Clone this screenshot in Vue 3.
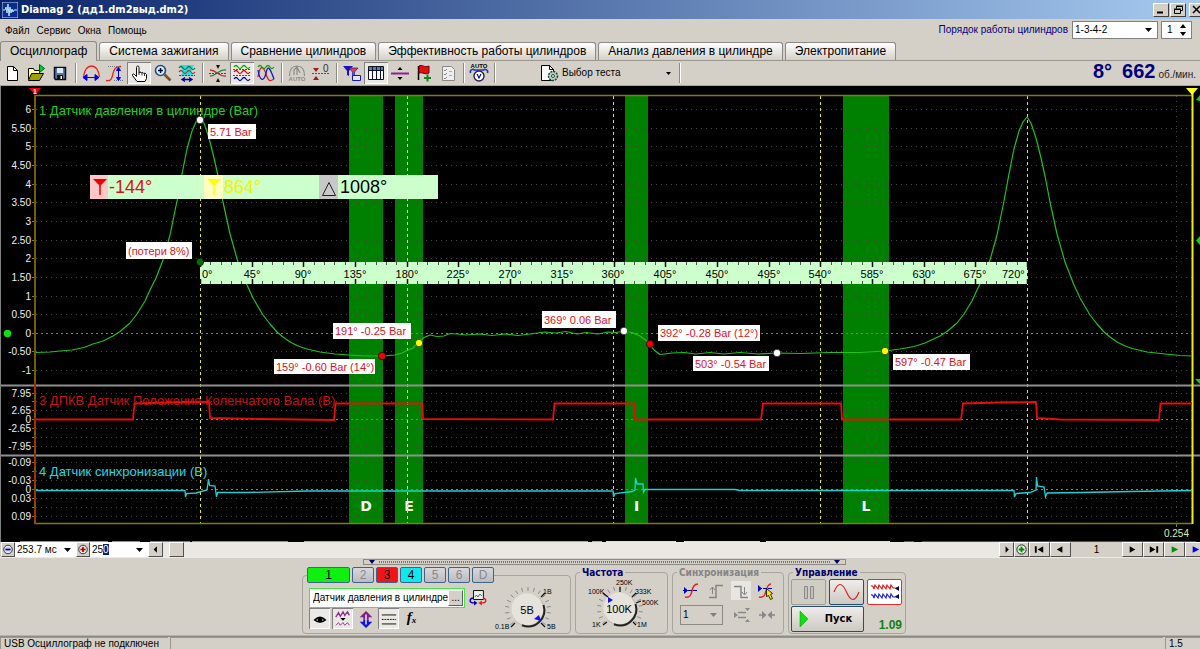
<script setup>
import { ref, onMounted } from 'vue'

const menu = ['Файл', 'Сервис', 'Окна', 'Помощь']
const tabs = [
  'Осциллограф',
  'Система зажигания',
  'Сравнение цилиндров',
  'Эффективность работы цилиндров',
  'Анализ давления в цилиндре',
  'Электропитание'
]
const activeTab = ref(0)

const waves = (y, c) =>
  `<path d="M4 ${y}q2-3 4 0t4 0 4 0 4 0" fill="none" stroke="${c}" stroke-width="1.3"/>`

const toolbar = [
  { label: 'Новый', svg: '<path d="M7.500 4.500h6l4 4v10h-10z" fill="#fff" stroke="#000"/><path d="M13.500 4.500v4h4" fill="none" stroke="#000"/>' },
  { label: 'Открыть', svg: '<path d="M4.500 17.500v-11h5l1 2h5v3" fill="#ffffa0" stroke="#000"/><path d="M4.500 18.500l3-7h12l-4 7z" fill="#a0a000" stroke="#000"/><path d="M15.500 2.500l5 4-5 4z" fill="#0c3" stroke="#052"/>' },
  { label: 'Сохранить', svg: '<path d="M6.500 5.500h11v12h-10l-1-1z" fill="#57789c" stroke="#0a0a20" stroke-width="1.500"/><path d="M9 6h6v5h-6z" fill="#dce8f0"/><path d="M9 13h6v4h-6z" fill="#111"/><path d="M12.500 14h1.500v3h-1.500z" fill="#fff"/>' },
  { sep: true },
  { label: 'Ширина', svg: '<path d="M4.500 15c1-7 3-11 8-11s7 4 8 11" fill="none" stroke="#f02020" stroke-width="1.300"/><path d="M4 15.500h16M8 12.500l-4 3 4 3zM16 12.500l4 3-4 3z" fill="#00e" stroke="#00e"/>' },
  { label: 'Высота', svg: '<path d="M3 18.500c6 1 6-3 7-7s2-7 8-7" fill="none" stroke="#f02020" stroke-width="1.300"/><path d="M5 4.500h12M11 18.500h9" stroke="#777" stroke-dasharray="1 1"/><path d="M15.500 7v10M13.500 8.500l2-3 2 3zM13.500 15.500l2 3 2-3z" fill="#00e" stroke="#00e"/>' },
  { label: 'Рука', pressed: true, svg: '<path d="M10 19.500l-4.500-6c-.5-1.500 1-2 2-1l2 2v-9c0-2 2.500-2 2.500 0v5l1-.500 1.500.7 1.300-.2 1 1 1.400-.3 1.300 1.300v4l-1.500 3z" fill="#fff" stroke="#000"/><path d="M12 10v3M15 11v2.500M17.500 12v2" stroke="#000" stroke-width=".8"/>' },
  { label: 'Масштаб', svg: '<circle cx="9.500" cy="8.500" r="5" fill="#d8f0ff" stroke="#1c4c8c" stroke-width="1.600"/><path d="M7 8.500h5M9.500 6v5" stroke="#003" stroke-width="1.500"/><path d="M13.500 12.500l6 6" stroke="#7a5020" stroke-width="2.600"/>' },
  { label: 'Фильтр', svg: '<path d="M5 3h14l-3 7 3 4H5l3-4z" fill="#20e0e8"/>' + waves(6, '#087848') + waves(10, '#a04030') + '<path d="M4 13.500h16" stroke="#066" stroke-dasharray="2 1"/><path d="M8 17.500h8M10 15.500l-3 2 3 2M14 15.500l3 2-3 2" fill="none" stroke="#009" stroke-width="1.300"/>' },
  { sep: true },
  { label: 'Наложение', svg: '<path d="M4 8c7 0 8 7 16 6" fill="none" stroke="#c03030" stroke-width="1.300"/><path d="M4 14c7 0 8-7 16-6" fill="none" stroke="#308040" stroke-width="1.300"/><path d="M3 11.500h18" stroke="#444" stroke-dasharray="2 1"/><path d="M10 3h4l-2 4zM10 20h4l-2-4z" fill="#111"/>' },
  { label: 'Каналы', pressed: true, svg: waves(5, '#0a0') + waves(10, '#d00') + waves(17, '#00c') + '<path d="M3 7.500h18M3 13.500h18" stroke="#555" stroke-dasharray="2 1"/>' },
  { label: 'Совмещение', svg: waves(5, '#0a0') + '<path d="M4 15c2-12 5-12 8-3s5 7 8 5" fill="none" stroke="#d02020" stroke-width="1.300"/><path d="M4 8c2 12 6 12 8 3s4-5 8 6" fill="none" stroke="#1515d0" stroke-width="1.300"/>' },
  { sep: true },
  { label: 'Авто', svg: '<path d="M4.500 14c0-7 3-10 7.500-10s7.500 3 7.500 10M12 4v9M9 13V8l3-3M15 11l-3-6" fill="none" stroke="#8c8a84" stroke-width="1.200"/><text x="12" y="19" text-anchor="middle" font-size="6" font-weight="bold" fill="#8c8a84">AUTO</text>' },
  { label: 'Ноль', svg: '<path d="M3 11.500h17" stroke="#555" stroke-dasharray="2 1"/><path d="M4 6h6l-3 4zM4 18h6l-3-4z" fill="#a01818"/><text x="14" y="10" font-size="10" fill="#333">0</text>' },
  { sep: true },
  { label: 'Фильтр каналов', svg: '<path d="M3 4h10l-4 5v5l-2-1V9z" fill="#1515c8"/><path d="M9 6h9l-3.500 4v7l-2-1v-6z" fill="#e04040" stroke="#1515c8" stroke-width=".7"/><path d="M12.500 13.500h8v5h-8z" fill="#dfe6ff" stroke="#1515c8"/>' },
  { label: 'Таблица', pressed: true, svg: '<path d="M4.500 4.500h15v13h-15z" fill="#fff" stroke="#112"/><path d="M5 5h14v3H5z" fill="#4c84ac"/><path d="M8.500 5v12M12.500 5v12M16.500 5v12M5 8.500h15" stroke="#113"/>' },
  { label: 'Разделить', svg: '<path d="M3 11.500h18" stroke="#902090" stroke-width="2"/><path d="M9.500 8h5l-2.500-3zM9.500 15h5l-2.500 3z" fill="#000"/>' },
  { label: 'Метка', svg: '<path d="M6.500 4v14" stroke="#000" stroke-width="1.500"/><path d="M7 4c3-2 5 2 10 0v7c-4 2-6-1-10 0z" fill="#e01010" stroke="#600"/><path d="M12 16h7M15.500 12.500v7" stroke="#088a20" stroke-width="2"/>' },
  { label: 'Отчёт', svg: '<path d="M6.500 4.500h9l3 3v11h-12z" fill="#eee" stroke="#888"/><path d="M8 8l1 1 2-2M8 12l1 1 2-2M8 16l1 1 2-2" fill="none" stroke="#888"/><path d="M13 9.500h3M13 13.500h3" stroke="#aaa"/>' },
  { sep: true },
  { label: 'Автоизмерение', svg: '<text x="12" y="6" text-anchor="middle" font-size="6" font-weight="bold" fill="#000">AUTO</text><circle cx="12" cy="14" r="5" fill="#fff" stroke="#224" stroke-width="1.400"/><path d="M10 12l2 4 2-4" fill="none" stroke="#00c" stroke-width="1.200"/><path d="M3.500 11c-1-4 3-4 4-3M20.500 11c1-4-3-4-4-3M7 8h10" fill="none" stroke="#2233b0" stroke-width="1.600"/>' },
  { sep: true }
]

const bands = [
  { x: 349, w: 34, t: 'D' },
  { x: 395, w: 28, t: 'E' },
  { x: 625, w: 23, t: 'I' },
  { x: 843, w: 46, t: 'L' }
]
const cycles = [200.5, 407.5, 613.5, 820.5, 1027.5]

const axis = [
  [110, '6'], [129, '5.50'], [147, '5'], [166, '4.50'], [185, '4'], [203, '3.50'], [222, '3'],
  [241, '2.50'], [259, '2'], [278, '1.50'], [297, '1'], [315, '0.50'], [334, '0', true],
  [352, '-0.50'], [371, '-1'],
  [394, '7.95'], [402, ''], [411, '2.65'], [420, '0', true], [429, '-2.65'], [438, ''], [447, '-7.95'],
  [463, '-0.09'], [472, ''], [481, '-0.03'], [490, '0', true], [499, '0.03'], [508, ''], [517, '0.09']
]

const rise = [[-107, 344], [-97, 341], [-87, 336], [-80, 331.500], [-70, 323], [-63, 314], [-55, 301], [-50, 290], [-44, 278], [-37, 260], [-30, 235], [-23, 201], [-18, 174], [-13, 149], [-8, 131], [-4, 122]]
const fall = [[4, 123], [9, 138], [14, 158], [18, 176], [23, 202], [30, 234], [38, 262], [47, 285], [53, 298], [63, 315], [70, 324], [77, 332], [83, 337], [90, 342], [97, 345.500], [105, 348.500], [120, 352]]
const at = (pts, x) => pts.map(([a, b]) => [a + x, b])
const pressure = [
  [36, 352.500], [50, 352], [60, 351], [72, 350], [84, 347.500],
  ...at(rise, 200), [200, 120], ...at(fall, 200),
  [335, 354], [349, 355], [365, 356], [383, 356], [395, 355], [402, 353], [407, 350.500], [413, 348],
  [418, 342.500], [424, 337.500], [430, 335], [437, 336.500], [444, 336], [450, 333.500], [457, 334],
  [466, 335], [480, 334], [492, 335.500], [505, 334], [518, 335.500], [530, 334], [545, 332], [556, 333],
  [566, 331.500], [577, 334], [586, 332.500], [598, 334], [608, 332], [616, 332.500], [624, 331], [632, 332.500],
  [640, 336], [648, 342], [654, 350], [660, 354.500], [672, 353], [684, 352.500], [696, 354], [710, 352.500],
  [724, 354], [740, 352.500], [758, 354], [777, 353], [800, 353.500], [830, 352.500], [860, 352.500],
  [885, 351], [900, 349], [914, 346.500], [925, 343], ...at(rise.slice(2), 1027), [1027, 117], ...at(fall, 1027),
  [1165, 354], [1180, 355.500], [1192, 356]
].map(p => p.join()).join(' ')

const crank = '36,419.500 133,419.500 134.500,403.500 170,402.500 209,402 210,418 260,419 334,420 335.500,403.500 422.500,403.500 423,419 553,419.500 554.500,403.500 634,403.500 635,419.500 761,419.500 763,403.500 841,403.500 842,419.500 961,419.500 963,403.500 1000,402.500 1036,402 1037,418 1060,419.500 1159,420 1160.500,403.500 1192,403.500'
const sync = '36,490.500 185,490.500 185.500,497 186.500,493.500 196,493 207,490 208.500,479 209.500,485.500 215,486 216.500,497 217.500,492.500 247,492.500 307,491 613,491 613.500,497 615,493.500 632,491.500 635,490 635.500,478 637,484 643,484 643.500,492 645,489.500 735,489.500 740,490.500 1014,490.500 1014.500,497 1016,493.500 1030,492.500 1036,490 1036.500,477 1037.500,486 1044,487 1045.500,497 1047,493 1082,492.500 1130,491.500 1192,490.500'

const flags = [
  { x: 208, y: 124, w: 48, h: 15, t: '5.71 Bar' },
  { x: 126, y: 242, w: 66, h: 17, t: '(потери 8%)' },
  { x: 333, y: 323, w: 78, h: 16, t: '191° -0.25 Bar' },
  { x: 274, y: 359, w: 101, h: 15, t: '159° -0.60 Bar (14°)' },
  { x: 542, y: 311, w: 74, h: 17, t: '369° 0.06 Bar' },
  { x: 658, y: 325, w: 102, h: 16, t: '392° -0.28 Bar (12°)' },
  { x: 693, y: 356, w: 76, h: 15, t: '503° -0.54 Bar' },
  { x: 893, y: 354, w: 77, h: 16, t: '597° -0.47 Bar' }
]
const dots = [
  [200, 120, '#fff'], [200, 262, '#0a6a0a'], [382, 356, '#f00000'], [419, 343, '#ffff00'],
  [624, 331, '#fff'], [650, 344, '#f00000'], [777, 353, '#fff'], [885, 351, '#ffff00']
]
const ticks = Array.from({ length: 81 }, (_, i) => ({ x: Math.round(200 + (i * 827) / 80) + 0.5, major: i % 5 === 0 }))
const degrees = Array.from({ length: 17 }, (_, i) => i * 45)
const degX = d => (d === 0 ? 202 : d === 720 ? 1002 : Math.round(200 + d * 1.1486))

const traces = [
  [20, 108, '#20e020'], [112, 140, '#20e020'], [150, 190, '#20c020'], [192, 288, '#20e020'],
  [304, 588, '#20e0e0'], [592, 602, '#20e0e0'], [606, 676, '#f0f040'], [684, 760, '#f0f040'], [766, 890, '#f0f040'],
  [904, 914, '#e02020'], [922, 1196, '#c02020']
]

const channels = [
  { n: '1', c: 'lime' }, { n: '2' }, { n: '3', c: 'red' }, { n: '4', c: 'cyan' }, { n: '5' }, { n: '6' }, { n: 'D' }
]

const knobTicks = (n, from, to) =>
  Array.from({ length: n }, (_, i) => {
    const a = ((from + ((to - from) * i) / (n - 1)) * Math.PI) / 180
    return { x1: Math.cos(a) * 19, y1: Math.sin(a) * 19, x2: Math.cos(a) * 23, y2: Math.sin(a) * 23 }
  })
const rays = knobTicks(17, 140, 400)

const scale = ref('250')
const scaleBox = ref(null)
onMounted(() => {
  scaleBox.value.focus()
  scaleBox.value.setSelectionRange(2, 3)
})
</script>

<template>
  <div class="window">
    <header class="title">
      <svg class="app-icon" viewBox="0 0 16 16"><rect width="16" height="16" fill="#0c2c90" stroke="#c8d8f8" /><path d="M1 8h2l1-3 1 6 1-9 1 12 1-9 1 6 1-4 1 3 1-2h3" fill="none" stroke="#bfe4ff" /></svg>
      <h1>Diamag 2 (дд1.dm2выд.dm2)</h1>
      <div class="sys">
        <button aria-label="Свернуть"><svg viewBox="0 0 14 11"><path d="M3 8.500h6" stroke="#000" stroke-width="2" /></svg></button>
        <button aria-label="Восстановить"><svg viewBox="0 0 14 11"><path d="M5.500 4.500v-2h6v4h-2M5 2h7" fill="none" stroke="#000" /><path d="M3.500 5.500h6v4h-6zM3 5h7" fill="none" stroke="#000" /></svg></button>
        <button class="close" aria-label="Закрыть"><svg viewBox="0 0 14 11"><path d="M3 2l7 7M10 2l-7 7" stroke="#000" stroke-width="1.500" /></svg></button>
      </div>
    </header>

    <div class="menubar">
      <nav><button v-for="m in menu" :key="m">{{ m }}</button></nav>
      <div class="order">
        <label for="order">Порядок работы цилиндров</label>
        <span class="combo order-combo">
          <select id="order"><option>1-3-4-2</option></select>
          <svg viewBox="0 0 7 4"><path d="M0 0h7L3.500 4z" /></svg>
        </span>
        <span class="spin">
          <input type="text" value="1" aria-label="Номер цилиндра">
          <svg viewBox="0 0 8 12"><path d="M1 4h6L4 0zM1 8h6l-3 4z" /></svg>
        </span>
      </div>
    </div>

    <div class="tabs" role="tablist">
      <button v-for="(t, i) in tabs" :key="t" role="tab" :aria-selected="activeTab === i" :class="{ active: activeTab === i }" @click="activeTab = i">{{ t }}</button>
    </div>

    <div class="toolbar">
      <template v-for="(b, i) in toolbar" :key="i">
        <i v-if="b.sep" class="sep" />
        <button v-else class="tool" :class="{ pressed: b.pressed }" :aria-label="b.label"><svg viewBox="0 0 24 22" v-html="b.svg" /></button>
      </template>
      <button class="test">
        <svg class="test-icon" viewBox="0 0 20 18"><path d="M1.500 1.500h8l4 4v11h-12z" fill="#fff" stroke="#000" /><path d="M9.500 1.500v4h4" fill="none" stroke="#000" /><circle cx="13" cy="12" r="4.500" fill="#b9d0c8" stroke="#243" stroke-width="1.500" stroke-dasharray="2 1" /><circle cx="13" cy="12" r="1.500" fill="#fff" stroke="#243" /></svg>
        <span>Выбор теста</span>
        <svg class="caret" viewBox="0 0 5 3"><path d="M0 0h5L2.500 3z" /></svg>
      </button>
      <i class="sep" />
      <output class="rpm"><b>8°</b><b>662</b><span>об./мин.</span></output>
    </div>

    <svg class="scope" viewBox="0 86 1200 456" role="img" aria-label="Осциллограмма">
      <rect x="0" y="86" width="1200" height="456" fill="#000" />
      <path d="M.5 86v456" stroke="#808080" />
      <rect v-for="b in bands" :key="b.t" :x="b.x" y="96" :width="b.w" height="427" fill="#008000" />

      <g shape-rendering="crispEdges">
        <path v-for="a in axis" :key="a[0]" :d="`M36 ${a[0] - 0.5}H1192`" :class="a[2] ? 'zero' : 'grid'" />
        <path d="M1176.500 96V523" class="grid" />
        <path v-for="a in axis" :key="'t' + a[0]" :d="`M32 ${a[0] - 0.5}h3`" stroke="#808000" />
      </g>
      <text v-for="a in axis" :key="'l' + a[0]" x="31" :y="a[0] + 3" class="axis">{{ a[1] }}</text>

      <text x="39" y="115" class="chan" fill="#20d020">1 Датчик давления в цилиндре (Bar)</text>
      <text x="39" y="405" class="chan" fill="#c01414">3 ДПКВ Датчик Положения Коленчатого Вала (В)</text>
      <text x="39" y="476" class="chan" fill="#20d8e0">4 Датчик синхронизации (В)</text>
      <text v-for="b in bands" :key="'n' + b.t" :x="b.x + b.w / 2" y="511" class="band">{{ b.t }}</text>

      <path v-for="c in cycles" :key="c" :d="`M${c} 96V523`" class="cycle" />

      <path d="M1 385.500H1200M1 455.500H1200" stroke="#909090" stroke-width="2" />
      <path d="M35 95.500H1192M35 523.500H1192" stroke="#808000" stroke-width="1.500" />
      <path d="M35 95V524" stroke="#706000" stroke-width="2" />
      <path d="M35 381V524" stroke="#d00000" stroke-dasharray="14 4" />
      <path d="M1192.500 92V524" stroke="#f0f000" stroke-width="2" />

      <polyline :points="pressure" fill="none" stroke="#20c020" stroke-width="1.200" stroke-linejoin="round" />
      <polyline :points="crank" fill="none" stroke="#e80c0c" stroke-width="1.800" />
      <polyline :points="sync" fill="none" stroke="#20d0d0" stroke-width="1.300" />

      <rect x="200" y="262" width="827" height="22" fill="#ccffcc" />
      <path v-for="t in ticks" :key="t.x" :d="`M${t.x} 262v${t.major ? 5 : 3}M${t.x} 284v${t.major ? -5 : -3}`" stroke="#111" :stroke-width="t.major ? 1.5 : 0.7" />
      <text v-for="d in degrees" :key="'d' + d" :x="degX(d)" y="278" class="deg" :class="{ start: d === 0 || d === 720 }">{{ d }}°</text>

      <rect x="90" y="175" width="348" height="24" fill="#ccffcc" />
      <rect x="90" y="175" width="18" height="24" fill="#ffc8c8" />
      <rect x="204" y="175" width="19" height="24" fill="#ffffc0" />
      <rect x="319" y="175" width="19" height="24" fill="#c8c8c8" />
      <path d="M93 179h14l-7 7z" fill="#f00000" /><path d="M100 180v15" stroke="#f00000" stroke-width="1.500" />
      <path d="M207 179h14l-7 7z" fill="#ffff00" /><path d="M214 180v15" stroke="#ffff00" stroke-width="1.500" />
      <path d="M322.500 195.500h13l-6.500-13z" fill="none" stroke="#222" />
      <text x="109" y="193" class="reading" fill="#e01010">-144°</text>
      <text x="224" y="193" class="reading" fill="#f4f400">864°</text>
      <text x="340" y="193" class="reading" fill="#000">1008°</text>

      <circle v-for="d in dots" :key="'c' + d[0] + d[1]" :cx="d[0]" :cy="d[1]" r="3.700" :fill="d[2]" stroke="#000" stroke-width=".6" />
      <g v-for="f in flags" :key="f.t">
        <rect :x="f.x" :y="f.y" :width="f.w" :height="f.h" fill="#fff" />
        <text :x="f.x + 2" :y="f.y + f.h / 2 + 4" class="flag">{{ f.t }}</text>
      </g>

      <circle cx="7.500" cy="333.500" r="3.700" fill="#10e010" />
      <path d="M29 88h12l-6 7z" fill="#f00000" /><text x="35" y="94" class="mark">1</text>
      <path d="M1186 88h12l-6 7z" fill="#ffff20" />
      <path d="M1200 236v9l-4-4.500zM1200 95v6l-4-1zM1195 379h5v5z" fill="#10d010" />
      <text x="1189" y="537" class="axis time">0.254</text>
      <path v-for="t in traces" :key="t[0]" :d="`M${t[0]} 541.500H${t[1]}`" :stroke="t[2]" />
      <path d="M1176.500 524v3" stroke="#808000" />
    </svg>

    <div class="scroll">
      <button class="zoom" aria-label="Уменьшить"><svg viewBox="0 0 14 14"><circle cx="7" cy="7" r="5" fill="#dce0f0" stroke="#222" /><path d="M4 7h6" stroke="#00a" stroke-width="2" /></svg></button>
      <span class="combo time-combo">
        <select aria-label="Длительность"><option>253.7 мс</option></select>
        <svg viewBox="0 0 7 4"><path d="M0 0h7L3.500 4z" /></svg>
      </span>
      <button class="zoom" aria-label="Увеличить"><svg viewBox="0 0 14 14"><circle cx="7" cy="7" r="5" fill="#f0dcdc" stroke="#222" /><path d="M4 7h6M7 4v6" stroke="#a00" stroke-width="2" /></svg></button>
      <span class="combo scale-combo">
        <input ref="scaleBox" v-model="scale" type="text" aria-label="Масштаб">
        <svg viewBox="0 0 7 4"><path d="M0 0h7L3.500 4z" /></svg>
      </span>
      <button class="arrow" aria-label="Влево"><svg viewBox="0 0 14 14"><path d="M8.500 3.500v7L5 7z" /></svg></button>
      <div class="track"><button class="thumb" aria-label="Ползунок" /></div>
      <button class="arrow" aria-label="Вправо"><svg viewBox="0 0 14 14"><path d="M6 3.500v7L9.500 7z" /></svg></button>
      <button class="arrow" aria-label="Добавить"><svg viewBox="0 0 14 14"><circle cx="7" cy="7" r="5" fill="#dcf0dc" stroke="#222" /><path d="M4 7h6M7 4v6" stroke="#080" stroke-width="2" /></svg></button>
      <button class="nav" aria-label="В начало"><svg viewBox="0 0 20 14"><path d="M5 3.500h2v7H5zM14 3.500v7L8 7z" /></svg></button>
      <button class="nav" aria-label="Назад"><svg viewBox="0 0 20 14"><path d="M12 3.500v7L6 7z" /></svg></button>
      <span class="page">1</span>
      <button class="nav" aria-label="Вперёд"><svg viewBox="0 0 20 14"><path d="M7 3.500v7l6-3.500z" /></svg></button>
      <button class="nav" aria-label="В конец"><svg viewBox="0 0 20 14"><path d="M13 3.500h2v7h-2zM6 3.500v7l6-3.500z" /></svg></button>
      <button class="nav" aria-label="Воспроизвести"><svg viewBox="0 0 20 14"><path d="M7 3.500v7l7-3.500z" fill="#0a8a0a" /></svg></button>
      <button class="nav last" aria-label="Запись"><svg viewBox="0 0 20 14"><path d="M7 3.500v7l7-3.500z" fill="#0000e8" /></svg></button>
    </div>

    <div class="splitter">
      <div class="grip">
        <svg viewBox="0 0 6 4"><path d="M0 0h6L3 4z" fill="#006" /></svg>
        <i />
        <svg viewBox="0 0 6 4"><path d="M0 0h6L3 4z" fill="#006" /></svg>
      </div>
    </div>

    <main class="panel">
      <fieldset class="channel">
        <legend>
          <button v-for="c in channels" :key="c.n" :class="c.c">{{ c.n }}</button>
        </legend>
        <div class="left">
          <div class="name-row">
            <span class="name">
              <input type="text" value="Датчик давления в цилиндре" aria-label="Имя датчика">
              <button aria-label="Выбрать датчик">...</button>
            </span>
            <svg class="swap" viewBox="0 0 18 18"><path d="M4.500 1.500h10v9h-10z" fill="#eee" stroke="#111" /><path d="M6 8l1.500-2L9 8l2-3 2 2" fill="none" stroke="#284" /><path d="M4 9c-4 1-4 5 1 5" fill="none" stroke="#00a" stroke-width="1.300" /><path d="M5 11.500v5L8.500 14z" fill="#00a" /><path d="M14 9c4 1 4 5-1 5" fill="none" stroke="#d22" stroke-width="1.300" /><path d="M13 11.500v5L9.500 14z" fill="#d22" /></svg>
          </div>
          <div class="modes">
            <button class="pressed" aria-label="Показать"><svg viewBox="0 0 20 20"><path d="M4 11q6-6 12 0-6 5-12 0z" fill="#888" stroke="#000" stroke-width="1.500" /><circle cx="10" cy="11" r="2.500" /></svg></button>
            <button class="pressed" aria-label="Сглаживание"><svg viewBox="0 0 20 20"><path d="M2 8l3-5 2 4 3-5 2 4 3-4 2 4" fill="none" stroke="#903090" stroke-width="1.500" /><path d="M2 17l3-3 2 3 3-3 2 3 3-3 2 3" fill="none" stroke="#903090" /><path d="M7 9h6l-3 3z" /></svg></button>
            <button aria-label="Сдвиг"><svg viewBox="0 0 20 20"><path d="M10 1l7 7h-4v2.500H7V8H3z" fill="#802080" /><path d="M10 20l7-7h-4v-2.500H7V13H3z" fill="#1010d8" /><path d="M10 5v11" stroke="#fff" stroke-width="1.500" /></svg></button>
            <button class="pressed" aria-label="Линии"><svg viewBox="0 0 20 20"><path d="M2 5.500h16M2 15.500h16" stroke="#000" /><path d="M2 10.500h16" stroke="#000" stroke-dasharray="2 1" /></svg></button>
            <button class="fx" aria-label="Функция"><i>f<sub>x</sub></i></button>
          </div>
        </div>
        <svg class="knob volts" viewBox="-36 -24 72 48">
          <line v-for="(r, i) in rays" :key="i" v-bind="r" stroke="#777" stroke-width=".8" />
          <circle r="16.500" fill="#b8b5ae" /><circle cx="-.7" cy="-.7" r="16" fill="#e6e3dc" /><path d="M15.500 -5A16.300 16.300 0 0 1 -6 15.200" fill="none" stroke="#222" stroke-width="2" />
          <path d="M11 5l2 6-7-2z" fill="#1010f0" />
          <path d="M13 13l4 4M-13 13l-4 4M13 -13l4-4" stroke="#111" stroke-width="1.200" />
          <text x="-1" y="4" class="value">5В</text>
          <text x="15" y="-16" class="tiny">1В</text><text x="19" y="19" class="tiny">5В</text><text x="-33" y="19" class="tiny">0.1В</text>
        </svg>
      </fieldset>

      <fieldset class="freq">
        <legend>Частота</legend>
        <svg class="knob" viewBox="-44 -31 90 54">
          <line v-for="(r, i) in rays" :key="i" v-bind="r" stroke="#777" stroke-width=".8" />
          <circle r="16.500" fill="#b8b5ae" /><circle cx="-.7" cy="-.7" r="16" fill="#e6e3dc" /><path d="M15.500 -5A16.300 16.300 0 0 1 -6 15.200" fill="none" stroke="#222" stroke-width="2" />
          <path d="M-12 -12l5 3-5 3z" fill="#1010f0" />
          <path d="M13 13l3 3M-13 13l-4 3M-12 -12l-5-4M12 -12l4-4M16 -6l5-2M0 -17v-5" stroke="#111" stroke-width="1.200" />
          <text x="-1" y="4" class="value">100K</text>
          <text x="-4" y="-24" class="tiny">250K</text><text x="-32" y="-15" class="tiny">100K</text><text x="15" y="-15" class="tiny">333K</text><text x="22" y="-4" class="tiny">500K</text><text x="-28" y="18" class="tiny">1K</text><text x="17" y="18" class="tiny">1M</text>
        </svg>
      </fieldset>

      <fieldset class="syncbox">
        <legend>Синхронизация</legend>
        <div class="sync-icons">
          <button aria-label="Уровень"><svg viewBox="0 0 20 18"><path d="M4 15c5 1 6-2 7-6s2-7 6-7" fill="none" stroke="#e02020" stroke-width="1.400" /><path d="M2 8.500h14" stroke="#00a" stroke-dasharray="4 1" /><path d="M3 5v7l4-3.500z" fill="#0000d0" /></svg></button>
          <button disabled aria-label="По фронту"><svg viewBox="0 0 20 18"><path d="M3 15.500h7v-12h7" fill="none" stroke="#858585" stroke-width="1.500" /><path d="M6.500 5v7M4 8l2.500-3L9 8" fill="none" stroke="#858585" /></svg></button>
          <button disabled class="on" aria-label="По спаду"><svg viewBox="0 0 20 18"><path d="M3 4.500h7v11h7" fill="none" stroke="#858585" stroke-width="1.500" /><path d="M13.500 5v7M11 10l2.500 3L16 10" fill="none" stroke="#858585" /></svg></button>
          <button aria-label="Выбор уровня"><svg viewBox="0 0 20 18"><path d="M3 15c5 1 6-2 7-6s2-7 5-7" fill="none" stroke="#e02020" stroke-width="1.400" /><path d="M2 6.500h14" stroke="#00a" stroke-dasharray="4 1" /><path d="M2 3v7l4-3.500z" fill="#0000d0" /><path d="M10.500 6.500l6 5-2 1 2 4-2 1-2-4-2 1z" fill="#ffe800" stroke="#000" stroke-width=".8" /></svg></button>
        </div>
        <div class="sync-row">
          <span class="combo sync-combo">
            <select disabled aria-label="Канал синхронизации"><option>1</option></select>
            <svg viewBox="0 0 7 4"><path d="M0 0h7L3.500 4z" /></svg>
          </span>
          <svg class="gray" viewBox="0 0 18 14"><path d="M5 4.500h8M5 9.500h8" stroke="#888" stroke-width="1.500" /><path d="M1 4v6l4-3zM12 0h5l-2.500 3zM12 14h5l-2.500-3z" fill="#888" /></svg>
          <svg class="gray" viewBox="0 0 18 14"><path d="M1 7h6M17 7h-6" stroke="#888" stroke-width="1.500" /><path d="M4 3v8l4.500-4zM14 3v8L9.500 7z" fill="#888" /></svg>
        </div>
      </fieldset>

      <fieldset class="control">
        <legend>Управление</legend>
        <div class="control-grid">
          <button class="flat" disabled aria-label="Пауза"><svg viewBox="0 0 33 24"><path d="M12.500 6.500h3v12h-3zM18.500 6.500h3v12h-3z" fill="#c4c1ba" stroke="#8a8a8a" /></svg></button>
          <button class="wave" aria-label="Синус"><svg viewBox="0 0 33 24"><path d="M4 12C8 2 12 2 16.500 12S25 22 29 12" fill="none" stroke="#e02020" stroke-width="1.200" /></svg></button>
          <button class="red-box" aria-label="Поток"><svg viewBox="0 0 33 24"><path d="M3 6q2-1 3 3l1-4 3 4 1-4 3 4 1-4 3 4 1-4 3 4 1-4 2 3h4" fill="none" stroke="#e02020" stroke-width="1.200" /><path d="M3 15q2-1 3 3l1-4 3 4 1-4 3 4 1-4 3 4 1-4 3 4 1-4 2 3h4" fill="none" stroke="#2020e0" stroke-width="1.200" /><path d="M31 6v5l-4-2.500zM31 14v5l-4-2.500z" fill="#006" /></svg></button>
          <button class="start"><svg viewBox="0 0 10 16"><path d="M1 0v16l8-8z" fill="#10e010" stroke="#0a8a0a" stroke-width=".5" /></svg><span>Пуск</span></button>
          <output>1.09</output>
        </div>
      </fieldset>
    </main>

    <footer class="status"><span class="msg">USB Осциллограф не подключен</span><span class="fill" /><span class="ver">1.5</span></footer>
  </div>
</template>

<style>
html, body { background: #d4d0c8; }
</style>

<style scoped>
.window { font: 10px/12px "Liberation Sans", Arial, sans-serif; color: #000; background: #d4d0c8; overflow: hidden; }
.window * { box-sizing: border-box; }
button, input, select { font: inherit; color: inherit; margin: 0; padding: 0; border: 0; background: none; outline: none; border-radius: 0; }
svg { display: block; }
i { font-style: normal; }

.title { display: flex; align-items: center; height: 19px; padding-left: 2px; background: linear-gradient(90deg, #0a246a, #a6caf0); overflow: hidden; }
.app-icon { width: 16px; height: 16px; }
h1 { flex: 1; margin: 0 0 0 3px; font: bold 11px/16px "DejaVu Sans Condensed", "DejaVu Sans", sans-serif; color: #fff; white-space: nowrap; }
.sys { display: flex; margin-right: -6px; }
.sys button { width: 16px; height: 14px; background: #d4d0c8; border: 1px solid; border-color: #fff #404040 #404040 #fff; margin-right: 1px; }
.sys .close { margin-left: 2px; }
.sys svg { width: 14px; height: 11px; }

.menubar { display: flex; justify-content: space-between; height: 22px; padding: 1px 8px 0 5px; border-top: 1px solid #d4d0c8; }
nav { display: flex; gap: 7px; align-items: center; }
.order { display: flex; align-items: center; height: 18px; color: #00007a; }
.order label { margin-right: 4px; }
.combo { display: flex; align-items: center; position: relative; background: #fff; color: #000; }
.combo select, .combo input { flex: 1; width: 0; height: 100%; appearance: none; padding: 0 0 0 2px; opacity: 1; color: #000; }
.combo svg { width: 7px; height: 4px; margin-right: 5px; pointer-events: none; }
.order-combo { width: 86px; height: 18px; border: 1px solid #808080; }
.spin { display: flex; align-items: center; width: 31px; height: 18px; margin-left: 3px; background: #fff; border: 1px solid #808080; color: #000; }
.spin input { flex: 1; width: 0; padding-left: 5px; }
.spin svg { width: 8px; height: 12px; margin-right: 4px; }

.tabs { display: flex; align-items: flex-end; gap: 2px; height: 20px; border-bottom: 1px solid #9a978f; }
.tabs button { height: 18px; padding: 0 9px; font-size: 12px; line-height: 17px; white-space: nowrap; background: linear-gradient(#fff, #d4d0c8); border: 1px solid #8c8a84; border-bottom: 0; border-radius: 3px 3px 0 0; }
.tabs .active { height: 20px; margin-bottom: -1px; background: #d4d0c8; }

.toolbar { display: flex; align-items: center; height: 25px; border-bottom: 1px solid #a8a59d; }
.tool { flex: none; width: 24px; height: 22px; }
.tool svg { width: 24px; height: 22px; }
.pressed { background: #ebe9e4; box-shadow: inset 1px 1px #808080, inset -1px -1px #fff; }
.sep { flex: none; width: 7px; height: 20px; background: linear-gradient(90deg, transparent 3px, #8c8a84 3px 4px, #fff 4px 5px, transparent 5px); }
.test { display: flex; align-items: center; width: 136px; height: 22px; margin-left: 42px; text-align: left; }
.test-icon { width: 20px; height: 18px; margin-right: 2px; }
.test span { flex: 1; }
.caret { width: 5px; height: 3px; margin-right: 5px; }
.rpm { display: flex; align-items: baseline; margin-left: auto; padding-right: 4px; color: #222; line-height: 22px; }
.rpm b { font-size: 20px; color: #00007a; margin-right: 10px; }
.rpm b + b { margin-right: 3px; }

.scope { width: 100%; height: auto; }
.grid { stroke: #484440; stroke-dasharray: 1 4; }
.zero { stroke: #8c8c10; stroke-dasharray: 2 3; }
.cycle { stroke: #e8e820; stroke-dasharray: 3 3; }
.axis { font-size: 10px; fill: #f0f0f0; text-anchor: end; }
.time { fill: #d8f0b0; }
.chan { font-size: 13px; }
.band { font: bold 14px "DejaVu Sans", sans-serif; fill: #fff; text-anchor: middle; }
.deg { font-size: 11px; fill: #000; text-anchor: middle; }
.deg.start { text-anchor: start; }
.reading { font-size: 18px; }
.flag { font-size: 11px; fill: #e0101c; }
.mark { font-size: 7px; font-weight: bold; fill: #fff; text-anchor: middle; }

.scroll { display: flex; height: 15px; line-height: 14px; padding-left: 1px; }
.scroll > button, .thumb { flex: none; background: #d4d0c8; border: 1px solid; border-color: #fff #505050 #505050 #fff; }
.scroll > button svg { width: 100%; height: 13px; }
.zoom { width: 14px; }
.arrow { width: 15px; }
.nav { width: 21px; }
.scroll .last { margin-right: -6px; }
.time-combo { width: 61px; }
.scale-combo { width: 58px; }
.scale-combo input::selection { background: #0a246a; color: #fff; }
.track { flex: 1; background: #eae8e3; padding-left: 6px; }
.thumb { display: block; width: 15px; height: 15px; }
.page { width: 51px; text-align: center; line-height: 15px; }

.splitter { display: flex; justify-content: center; height: 7px; padding: 1px 0 0 8px; border-top: 1px solid #eceae6; }
.grip { display: flex; align-items: center; gap: 4px; width: 483px; height: 6px; padding: 0 5px; border: 1px solid #8c8a84; }
.grip svg { width: 6px; height: 4px; }
.grip i { flex: 1; height: 2px; background: repeating-linear-gradient(90deg, #777 0 1px, transparent 1px 2px); }

.panel { display: flex; justify-content: center; gap: 4px; height: 73px; padding: 3px 0 2px 8px; border-bottom: 1px solid #8c8a84; box-shadow: inset 0 -1px #b4b1a9; }
fieldset { min-width: 0; margin: 0; padding: 0; height: 67px; border: 1px solid #a8a59d; border-radius: 4px; }
legend { margin-left: 4px; padding: 0 2px; font: bold 10px/11px "DejaVu Sans Condensed", "DejaVu Sans", sans-serif; color: #00006a; }
.channel { width: 269px; display: flex; }
.channel legend { display: flex; gap: 2px; margin: 0 0 0 4px; padding: 0; height: 16px; }
.channel legend button { width: 22px; height: 16px; font: 12px/14px "Liberation Sans", sans-serif; color: #888; background: linear-gradient(#d8d8dc, #bcbcc0); border: 1px solid #3c6488; border-radius: 2px; }
.channel legend .lime { width: 43px; background: #10f010; color: #000; }
.channel legend .red { background: #f01414; color: #000; }
.channel legend .cyan { background: #10e8f0; color: #000; }
.left { width: 184px; padding: 5px 0 0 6px; }
.name-row { display: flex; align-items: center; gap: 4px; }
.name { display: flex; width: 157px; height: 20px; padding: 1px; background: #fff; border: 1px solid #40e840; }
.name input { flex: 1; width: 0; padding-left: 2px; }
.name button { width: 15px; background: #d4d0c8; border: 1px solid; border-color: #fff #606060 #606060 #fff; line-height: 8px; }
.swap { width: 18px; height: 18px; }
.modes { display: flex; gap: 2px; }
.modes button { width: 21px; height: 21px; display: grid; place-items: center; }
.modes svg { width: 18px; height: 18px; }
.fx i { font: italic bold 15px/18px "Liberation Serif", serif; }
.fx sub { font-size: 9px; vertical-align: -1px; }
.volts { width: 72px; height: 48px; margin: 3px 0 0 5px; }
.value { font-size: 11px; text-anchor: middle; }
.tiny { font-size: 7px; }
.freq { width: 93px; }
.freq .knob { width: 90px; height: 54px; }
.syncbox { width: 112px; }
.syncbox legend { color: #858585; }
.sync-icons { display: flex; gap: 5px; padding: 3px 0 0 8px; }
.sync-icons button { width: 20px; height: 19px; }
.sync-icons svg { width: 20px; height: 18px; }
.sync-icons .on { background: #e8e6e1; }
.sync-row { display: flex; align-items: center; gap: 7px; padding: 5px 0 0 7px; }
.sync-combo { width: 43px; height: 20px; margin-right: 3px; background: #d4d0c8; border: 1px solid #8c8a84; }
.combo.sync-combo svg { fill: #808080; }
.gray { width: 18px; height: 14px; }
.control { width: 118px; }
.control-grid { display: grid; grid-template-columns: 35px 35px 35px; gap: 1px 3px; padding: 1px 0 0 2px; }
.control-grid button { height: 26px; border: 1px solid #28506c; border-radius: 2px; background: linear-gradient(#efedea, #ccc9c2); }
.control-grid .flat { border-color: #a09d96; background: #d0cdc5; }
.control-grid .red-box { border-color: #e83030; background: #fff; }
.control-grid svg { width: 33px; height: 24px; }
.control-grid .start { grid-column: span 2; display: flex; align-items: center; justify-content: center; gap: 16px; padding-right: 4px; font: bold 11px/14px "DejaVu Sans Condensed", "DejaVu Sans", sans-serif; }
.control-grid .start svg { width: 10px; height: 16px; }
.control-grid output { align-self: end; text-align: right; font: bold 12px/14px "Liberation Sans", sans-serif; color: #108010; }

.status { display: flex; gap: 2px; height: 12px; }
.status span { border-left: 1px solid #9a978f; border-top: 1px solid #9a978f; padding-left: 3px; overflow: hidden; white-space: nowrap; }
.msg { width: 168px; }
.fill { flex: 1; }
.ver { width: 35px; }
</style>
